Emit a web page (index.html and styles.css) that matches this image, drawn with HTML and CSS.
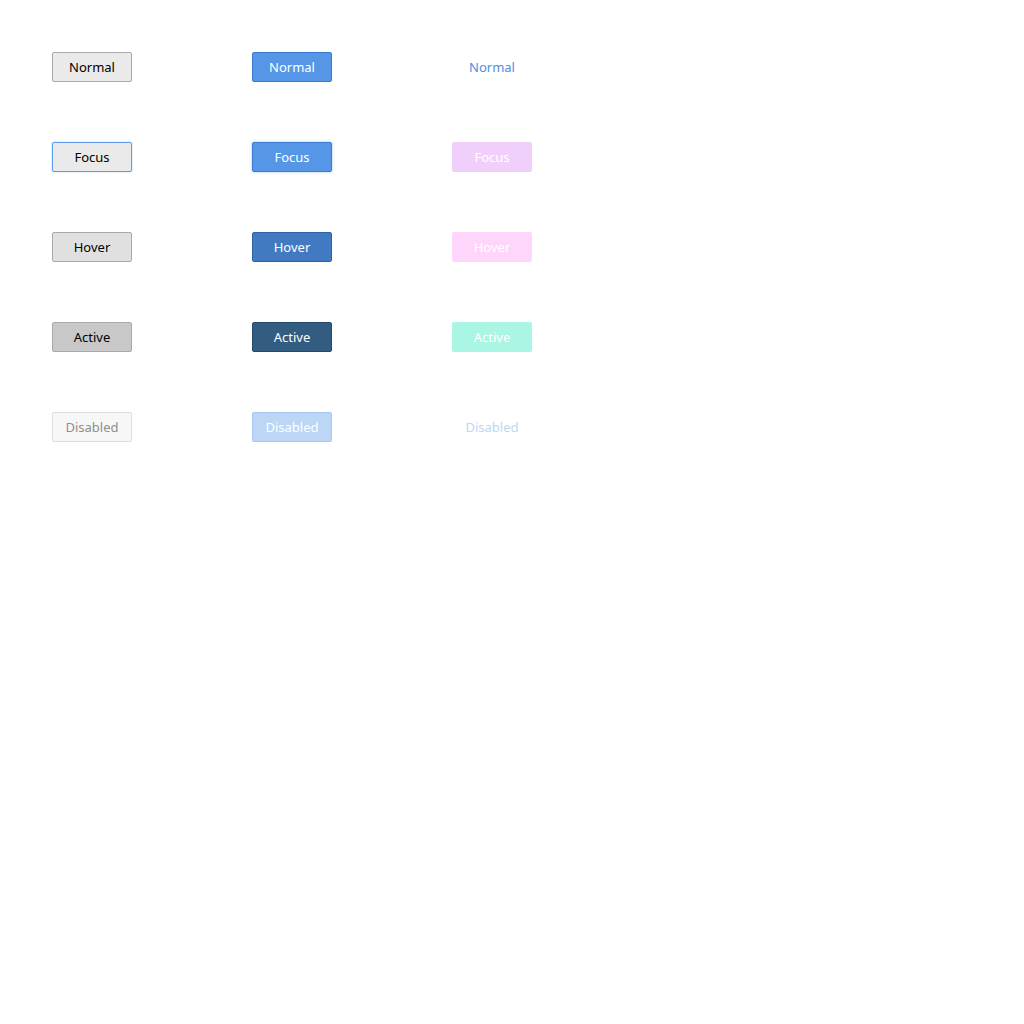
FILE: index.html
```html
<!DOCTYPE html>
<html lang="en">
<head>
    <meta charset="UTF-8">
    <meta name="viewport" content="width=device-width, initial-scale=1.0">
    <title>Button States</title>
    <link rel="stylesheet" href="styles.css">
</head>
<body>

    <div class="grid">
        <button class="btn">Normal</button>
        <button class="btn primary">Normal</button>
        <button class="btn link">Normal</button>

        <button class="btn is-focus">Focus</button>
        <button class="btn primary is-focus">Focus</button>
        <button class="btn link is-focus">Focus</button>

        <button class="btn is-hover">Hover</button>
        <button class="btn primary is-hover">Hover</button>
        <button class="btn link is-hover">Hover</button>

        <button class="btn is-active">Active</button>
        <button class="btn primary is-active">Active</button>
        <button class="btn link is-active">Active</button>

        <button class="btn" disabled>Disabled</button>
        <button class="btn primary" disabled>Disabled</button>
        <button class="btn link" disabled>Disabled</button>
    </div>

</body>
</html>
```

FILE: styles.css
```css
body {
    margin: 0;
    padding: 52px;
    background-color: #ffffff;
    font-family: "Noto Sans", "DejaVu Sans", sans-serif;
}
.grid {
    display: grid;
    grid-template-columns: repeat(3, 80px);
    column-gap: 120px;
    row-gap: 60px;
}
.btn {
    width: 80px;
    height: 30px;
    padding: 0;
    font-family: inherit;
    font-size: 13px;
    color: #000;
    background-color: #eaeaea;
    border: 1px solid #a9a9a9;
    border-radius: 2px;
    cursor: pointer;
}
.btn.is-focus {
    border-color: #5b9bea;
    box-shadow: 0 0 2px rgba(74, 144, 226, 0.4);
}
.btn.is-hover {
    background-color: #e0e0e0;
}
.btn.is-active {
    background-color: #c8c8c8;
}
.btn:disabled {
    color: #8e8e8e;
    background-color: #f7f7f7;
    border-color: #dcdcdc;
    cursor: default;
}

.btn.primary {
    color: #fff;
    background-color: #5596e6;
    border-color: #3d7bd0;
}
.btn.primary.is-focus {
    box-shadow: 0 0 3px rgba(74, 144, 226, 0.5);
}
.btn.primary.is-hover {
    background-color: #427ac2;
    border-color: #2f62a4;
}
.btn.primary.is-active {
    background-color: #335c81;
    border-color: #24486a;
}
.btn.primary:disabled {
    background-color: #bcd6f5;
    border-color: #a9c8ef;
}

.btn.link {
    color: #4a90e2;
    background-color: transparent;
    border-color: transparent;
}
.btn.link.is-focus {
    color: #fff;
    background-color: #f0d0fb;
    box-shadow: none;
}
.btn.link.is-hover {
    color: #fff;
    background-color: #ffd6fb;
}
.btn.link.is-active {
    color: #fff;
    background-color: #aaf5e3;
}
.btn.link:disabled {
    color: #bcd6f5;
    background-color: transparent;
}
```
